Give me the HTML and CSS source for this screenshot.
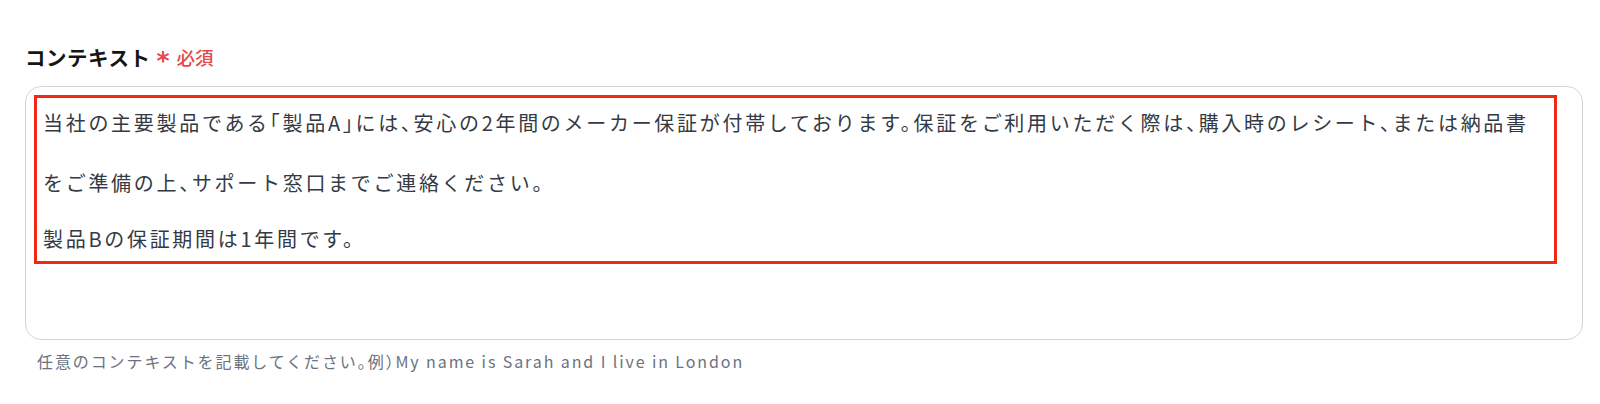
FILE: index.html
```html
<!DOCTYPE html>
<html lang="ja">
<head>
<meta charset="utf-8">
<title>コンテキスト</title>
<link rel="stylesheet" href="styles.css">
</head>
<body>
<div class="field">
  <div class="label">
    <span class="label-text">コンテキスト</span>
    <span class="req-mark">*</span>
    <span class="req-text">必須</span>
  </div>
  <div class="textarea">
    <div class="highlight">
      <p class="para para-first">当社の主要製品である「製品A」には、安心の2年間のメーカー保証が付帯しております。保証をご利用いただく際は、購入時のレシート、または納品書をご準備の上、サポート窓口までご連絡ください。</p>
      <p class="para para-second">製品Bの保証期間は1年間です。</p>
    </div>
  </div>
  <p class="hint">任意のコンテキストを記載してください。例）My name is Sarah and I live in London</p>
</div>
</body>
</html>
```
FILE: styles.css
```css
html, body {
  margin: 0;
  padding: 0;
  background: #ffffff;
}

body {
  font-family: "Noto Sans CJK JP", "Noto Sans", sans-serif;
}

.field {
  padding: 45px 0 0 25px;
  width: 1558px;
}

.label {
  display: flex;
  align-items: center;
  gap: 6px;
  height: 24px;
  margin-bottom: 17px;
}

.label-text {
  font-size: 20.5px;
  font-weight: 600;
  color: #151515;
  letter-spacing: 0.5px;
  line-height: 24px;
}

.req-mark {
  font-family: "DejaVu Sans", sans-serif;
  font-size: 25px;
  font-weight: 700;
  color: #e5484d;
  line-height: 24px;
  margin-top: 8px;
}

.req-text {
  font-size: 18.5px;
  font-weight: 500;
  color: #e5484d;
  line-height: 24px;
  margin-left: 1px;
}

.textarea {
  box-sizing: border-box;
  height: 254px;
  border: 1px solid #d1d5db;
  border-radius: 16px;
  padding: 8px 25px 0 8px;
}

.highlight {
  box-sizing: border-box;
  height: 169px;
  border: 3px solid #ee2a16;
  padding: 0 14px 0 6px;
  color: #333a44;
  font-size: 20px;
  letter-spacing: 2.7px;
  font-feature-settings: "halt";
}

.para {
  margin: 0;
}

.para-first {
  line-height: 60px;
  margin-top: -5px;
}

.para-second {
  line-height: 52px;
}

.hint {
  margin: 10px 0 0 12px;
  font-size: 16px;
  line-height: 22px;
  color: #6b7280;
  letter-spacing: 1.9px;
  font-feature-settings: "halt";
}
```
